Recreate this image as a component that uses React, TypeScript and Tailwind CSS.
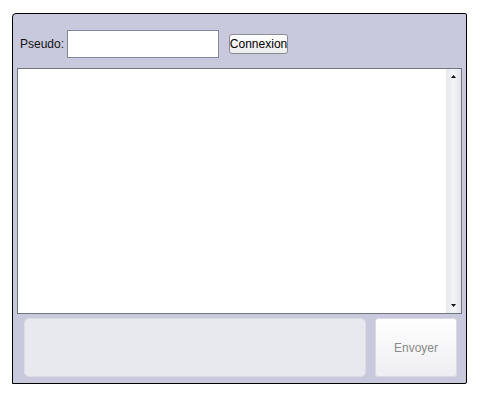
import React from "react";

export default function App() {
  return (
    <div className="w-[480px] h-[397px] bg-white pt-[13px] pl-[12px]" style={{ fontFamily: "'Liberation Sans', Arial, sans-serif" }}>
      <div className="w-[455px] h-[371px] border border-black rounded-tl-[4px] rounded-tr-[2px] rounded-br-[2px] bg-[#c9c9dd] flex flex-col">
        <div className="h-[54px] flex items-center pt-[5px] pl-[7px]">
          <span className="text-[12px] text-[#111]">Pseudo:</span>
          <div className="ml-[3px] w-[152px] h-[28px] bg-white border border-[#7e8a9c]" />
          <button className="ml-[10px] h-[20px] w-[59px] bg-gradient-to-b from-white to-[#ececec] border border-[#8c8c96] rounded-[3px] text-[12px] text-black leading-none flex items-center justify-center">
            Connexion
          </button>
        </div>
        <div className="mx-[4px] h-[246px] bg-white border border-[#6f7680] flex justify-end">
          <div className="w-[15px] h-full bg-gradient-to-r from-[#e6e8ee] via-[#f3f4f7] to-[#e2e4ea] flex flex-col items-center justify-between py-[6px]">
            <svg width="5" height="3" viewBox="0 0 5 3"><path d="M2.5 0 L5 3 L0 3 Z" fill="#111" /></svg>
            <svg width="5" height="3" viewBox="0 0 5 3"><path d="M0 0 L5 0 L2.5 3 Z" fill="#111" /></svg>
          </div>
        </div>
        <div className="flex pt-[4px] pl-[11px] gap-[9px]">
          <div className="w-[342px] h-[59px] rounded-[5px] bg-[#e8e8ef] border border-[#dcdce6]" />
          <button className="w-[82px] h-[59px] rounded-[3px] border border-[#dadae2] bg-gradient-to-b from-white to-[#eeeef2] text-[12px] text-[#8a8a8a] flex items-center justify-center">
            Envoyer
          </button>
        </div>
      </div>
    </div>
  );
}
